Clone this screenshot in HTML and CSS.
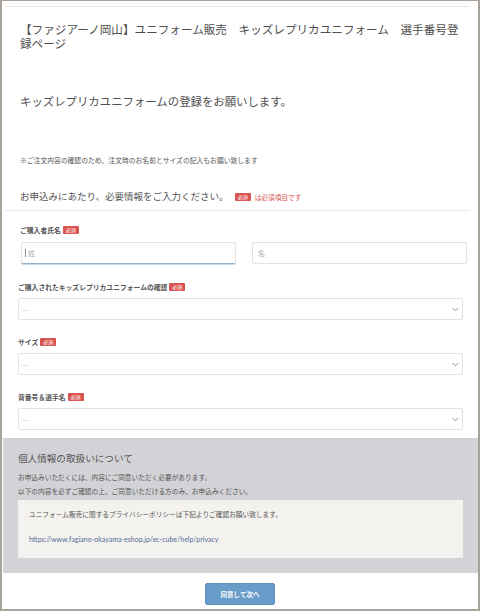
FILE: index.html
```html
<!DOCTYPE html>
<html lang="ja">
<head>
<meta charset="utf-8">
<title>選手番号登録ページ</title>
<link rel="stylesheet" href="styles.css">
</head>
<body>
<div class="topline"></div>
<div class="intro">
  <h1 class="title">【ファジアーノ岡山】ユニフォーム販売　キッズレプリカユニフォーム　選手番号登録ページ</h1>
  <p class="subtitle">キッズレプリカユニフォームの登録をお願いします。</p>
  <p class="note"><span class="mark">※</span>ご注文内容の確認のため、注文時のお名前とサイズの記入もお願い致します</p>
  <div class="lead">お申込みにあたり、必要情報をご入力ください。<span class="badge">必須</span><span class="req">は必須項目です</span></div>
</div>
<div class="divider"></div>
<form class="form">
  <div class="label label-first">ご購入者氏名<span class="badge">必須</span></div>
  <div class="name-row">
    <div class="field focused"><span class="caret"></span><input type="text" placeholder="姓"></div>
    <div class="field"><input type="text" placeholder="名"></div>
  </div>
  <div class="label label-gap1">ご購入されたキッズレプリカユニフォームの確認<span class="badge">必須</span></div>
  <div class="select-wrap">
    <select><option>---</option></select>
    <svg class="chev" viewBox="0 0 8 5" width="7" height="5"><path d="M0.6 0.6 L4 4 L7.4 0.6" fill="none" stroke="#8a8a8a" stroke-width="1.1"/></svg>
  </div>
  <div class="label label-gap2">サイズ<span class="badge">必須</span></div>
  <div class="select-wrap">
    <select><option>---</option></select>
    <svg class="chev" viewBox="0 0 8 5" width="7" height="5"><path d="M0.6 0.6 L4 4 L7.4 0.6" fill="none" stroke="#8a8a8a" stroke-width="1.1"/></svg>
  </div>
  <div class="label label-gap2">背番号＆選手名<span class="badge">必須</span></div>
  <div class="select-wrap">
    <select><option>---</option></select>
    <svg class="chev" viewBox="0 0 8 5" width="7" height="5"><path d="M0.6 0.6 L4 4 L7.4 0.6" fill="none" stroke="#8a8a8a" stroke-width="1.1"/></svg>
  </div>
</form>
<section class="privacy">
  <h2 class="privacy-title">個人情報の取扱いについて</h2>
  <p class="privacy-text">お申込みいただくには、内容にご同意いただく必要があります。<br>以下の内容を必ずご確認の上、ご同意いただける方のみ、お申込みください。</p>
  <div class="policy-box">
    <p class="policy-text">ユニフォーム販売に関するプライバシーポリシーは下記よりご確認お願い致します。</p>
    <p class="policy-link"><a href="#">https://www.fagiano-okayama-eshop.jp/ec-cube/help/privacy</a></p>
  </div>
</section>
<div class="actions">
  <button class="btn" type="button">同意して次へ</button>
</div>
</body>
</html>
```

FILE: styles.css
```css
html {
  margin: 0;
  padding: 0;
  background: #fff;
}
body {
  margin: 0;
  width: 480px;
  height: 611px;
  box-sizing: border-box;
  border: 2px solid #aaa39c;
  border-top-width: 1px;
  overflow: hidden;
  background: #fff;
  color: #555;
  font-family: "Lato", "Noto Sans CJK JP", sans-serif;
}
p, h1, h2 {
  margin: 0;
}
.mark {
  font-family: "Noto Sans CJK JP", "DejaVu Sans", sans-serif;
  font-variant-emoji: text;
  color: #555;
}
.topline {
  border-top: 1px solid #e7e7e7;
  margin: 5px 8px 0 3px;
}
.intro {
  padding: 16px 13px 0 18px;
}
.title {
  font-size: 11.6px;
  line-height: 14px;
  font-weight: normal;
  color: #4e4e4e;
}
.subtitle {
  margin-top: 44px;
  font-size: 11.4px;
  line-height: 14px;
  color: #4e4e4e;
}
.note {
  margin-top: 46px;
  font-size: 6.8px;
  line-height: 10px;
  color: #555;
}
.lead {
  margin-top: 25px;
  font-size: 9.5px;
  line-height: 14px;
  color: #555;
  display: flex;
  align-items: center;
}
.lead .badge {
  margin-left: 6px;
}
.req {
  margin-left: 4px;
  font-size: 6.7px;
  color: #d9534f;
}
.badge {
  display: inline-block;
  background: #d9534f;
  color: #fff;
  font-size: 5px;
  line-height: 8px;
  height: 8px;
  padding: 0 3px;
  border-radius: 1px;
  font-weight: normal;
  margin-left: 2px;
}
.divider {
  border-top: 1px solid #e8e8e8;
  margin: 6px 8px 0 3px;
}
.form {
  padding: 0 15px 0 16px;
}
.label {
  display: flex;
  align-items: center;
  font-size: 6.8px;
  line-height: 10px;
  font-weight: bold;
  color: #555;
}
.label-first {
  margin-top: 14px;
  padding-left: 2px;
}
.label-gap1 {
  margin-top: 18px;
}
.label-gap2 {
  margin-top: 17px;
}
.name-row {
  display: flex;
  gap: 16px;
  margin: 7px -4px 0 3px;
}
.field {
  flex: 1;
  position: relative;
}
.field input {
  display: block;
  width: 100%;
  height: 22px;
  box-sizing: border-box;
  border: 1px solid #e2e2e2;
  border-radius: 2px;
  padding: 0 5px;
  font-family: "Lato", "Noto Sans CJK JP", sans-serif;
  font-size: 7px;
  color: #555;
  background: #fff;
  outline: none;
}
.field input::placeholder {
  color: #aaa;
}
.focused input {
  border-color: #e4e4e4;
  border-bottom: 1px solid #8db3d3;
  box-shadow: 0 1px 0 #c9dcec;
  padding-left: 6px;
}
.caret {
  position: absolute;
  left: 4px;
  top: 7px;
  width: 1px;
  height: 8px;
  background: #888;
}
.select-wrap {
  position: relative;
  margin-top: 6px;
}
.select-wrap select {
  display: block;
  width: 100%;
  height: 22px;
  box-sizing: border-box;
  border: 1px solid #e2e2e2;
  border-radius: 2px;
  padding: 0 3px;
  font-family: "Lato", "Noto Sans CJK JP", sans-serif;
  font-size: 6px;
  color: #999;
  background: #fff;
  appearance: none;
  -webkit-appearance: none;
  outline: none;
}
.chev {
  position: absolute;
  right: 4px;
  top: 9px;
}
.privacy {
  margin: 8px 0 0 1px;
  background: #d3d3d7;
  padding: 14px 15px 15px 15px;
}
.privacy-title {
  font-size: 9.6px;
  line-height: 14px;
  font-weight: normal;
  color: #555;
}
.privacy-text {
  margin-top: 4px;
  font-size: 6.7px;
  line-height: 14px;
  color: #555;
}
.policy-box {
  margin-top: 2px;
  background: #f4f2ee;
  padding: 9px 11px 14px;
}
.policy-text {
  font-size: 6.7px;
  line-height: 10px;
  color: #555;
}
.policy-link {
  margin-top: 15px;
  font-size: 7px;
  line-height: 10px;
}
.policy-link a {
  color: #566a99;
  text-decoration: none;
}
.actions {
  display: flex;
  justify-content: center;
  padding-top: 10px;
}
.btn {
  width: 70px;
  height: 22px;
  background: #6a9cc9;
  border: 1px solid #5f91bf;
  border-radius: 2px;
  color: #fff;
  font-family: "Lato", "Noto Sans CJK JP", sans-serif;
  font-size: 6.5px;
  font-weight: bold;
  padding: 0;
}
```
